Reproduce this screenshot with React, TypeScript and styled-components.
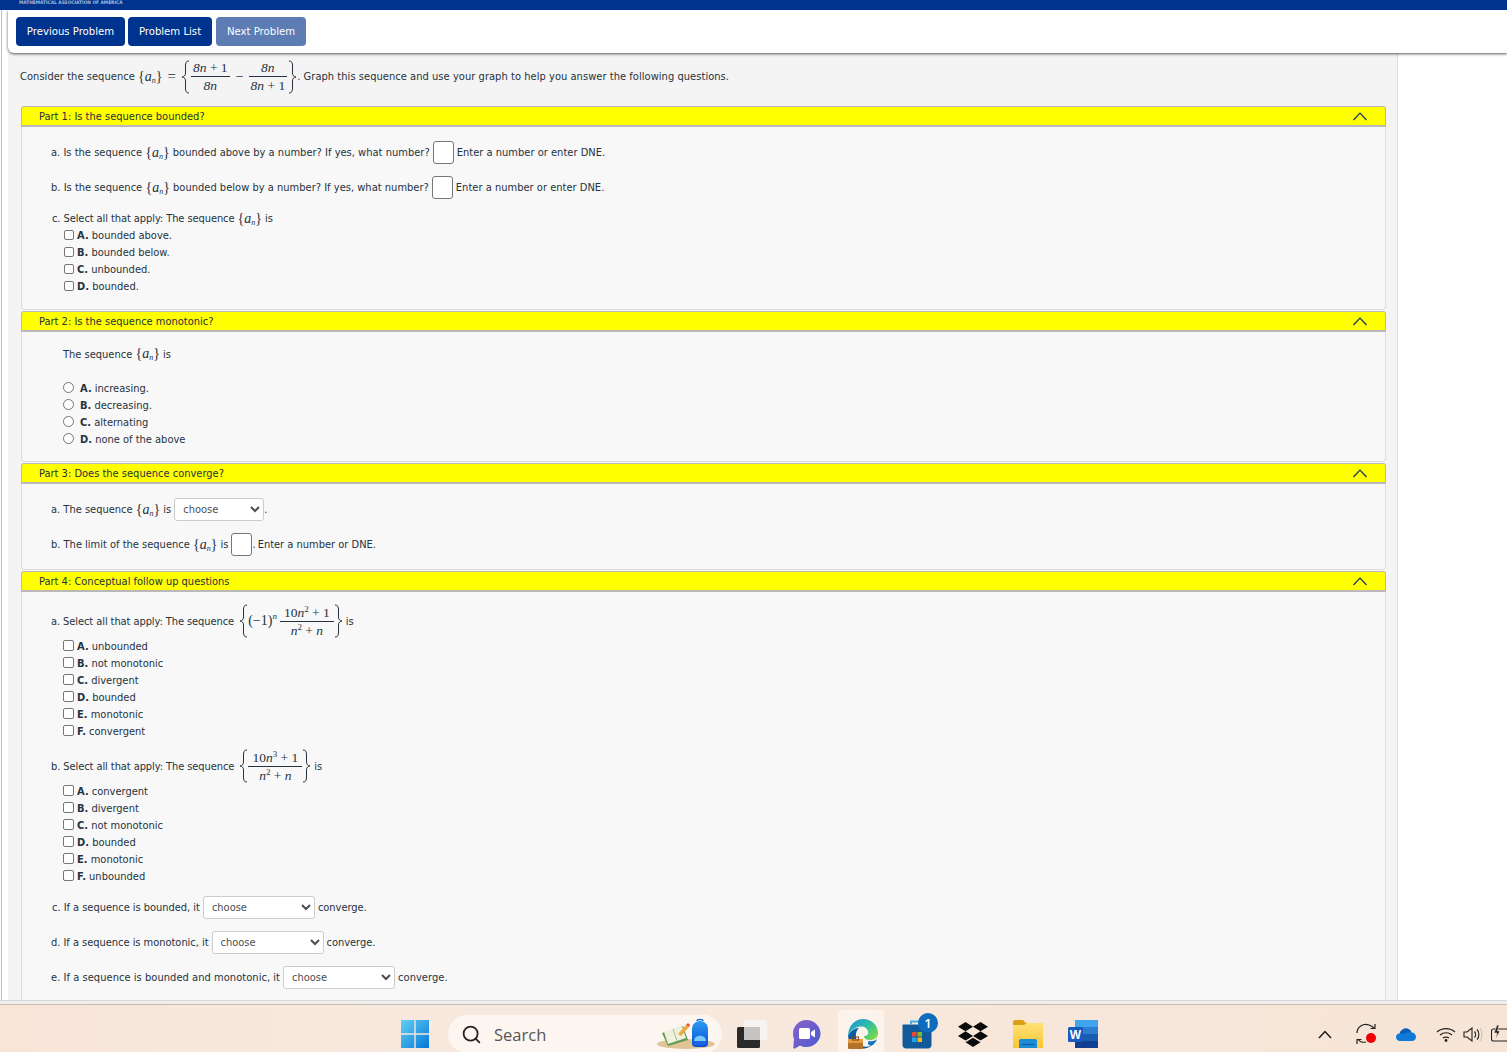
import styled, { createGlobalStyle } from "styled-components";
import { Search } from "lucide-react";
import type { ReactNode } from "react";

const GlobalStyle = createGlobalStyle`
    html, body {
        margin:0;
        padding:0;
        height:100%;
        overflow:hidden;
        background:#ffffff;
    }
    body {
        font-family:"DejaVu Sans Condensed", "DejaVu Sans", sans-serif;
        font-stretch:condensed;
        font-size:11px;
        color:#26323d;
    }
`;

const Page = styled.div`
    width:1507px;
    height:1052px;
    display:flex;
    flex-direction:column;
    overflow:hidden;
    background:#eeeeee;
`;

const TopBar = styled.div`
    height:10px;
    flex:none;
    background:#00338d;
    overflow:hidden;
    padding-left:19px;
    color:#a9bcdc;
    font-size:4.8px;
    line-height:5px;
    font-weight:700;
`;

const Middle = styled.div`
    flex:1;
    min-height:0;
    display:flex;
    overflow:hidden;
    background:#ffffff;
    border-bottom:1px solid #d8d8d8;
`;

const Gutter = styled.div`
    width:8px;
    flex:none;
    box-sizing:border-box;
    margin-left:1px;
    border-left:1px solid #bdbdbd;
    margin-right:-1px;
`;

const Column = styled.div`
    flex:1;
    min-width:0;
    display:flex;
    flex-direction:column;
`;

const NavBar = styled.div`
    height:43px;
    flex:none;
    box-sizing:border-box;
    display:flex;
    gap:3px;
    padding:7px 0 0 8px;
    background:#ffffff;
    border-bottom-left-radius:6px;
    box-shadow:0 1px 3px rgba(0, 0, 0, 0.65);
    position:relative;
    z-index:1;
`;

const NavButton = styled.button<{ $off?: boolean; $w: number }>`
    width:${p => p.$w}px;
    height:29px;
    border:0;
    border-radius:4px;
    padding:0;
    color:#ffffff;
    font-family:inherit;
    font-stretch:condensed;
    font-size:11.25px;
    background:${p => (p.$off ? "#5c7cb3" : "#00338d")};
    &:nth-child(3) {
        margin-left:1px;
    }
`;

const Content = styled.div`
    flex:1;
    min-height:0;
    display:flex;
    overflow:hidden;
`;

const Main = styled.div`
    width:1390px;
    flex:none;
    box-sizing:border-box;
    background:#f4f4f4;
    border-right:1px solid #dedede;
    padding:0 11px 0 13px;
`;

const Intro = styled.div`
    height:53px;
    box-sizing:border-box;
    padding-bottom:6px;
    margin-left:-1px;
    display:flex;
    align-items:center;
    white-space:pre;
    letter-spacing:0.05px;
`;

const Panel = styled.section`
    margin-bottom:1px;
`;

const PanelHead = styled.div`
    height:21px;
    box-sizing:border-box;
    display:flex;
    align-items:center;
    justify-content:space-between;
    padding:0.5px 18px 0 17px;
    background:#ffff00;
    border:1px solid #b9b9b9;
    border-bottom:2px solid #b9b9b9;
    border-radius:3px 3px 0 0;
    color:#26323d;
`;

const PanelBody = styled.div<{ $h: number; $top: number }>`
    height:${p => p.$h}px;
    box-sizing:border-box;
    padding:${p => p.$top}px 0 0 29px;
    background:#f8f8f8;
    border:1px solid #dedede;
    border-top:0;
    border-radius:0 0 4px 4px;
`;

const Row = styled.div<{ $h?: number; $gap?: number; $track?: number; $indent?: number }>`
    height:${p => p.$h ?? 35}px;
    margin-top:${p => p.$gap ?? 0}px;
    padding-left:${p => p.$indent ?? 0}px;
    letter-spacing:${p => p.$track ?? 0}px;
    display:flex;
    align-items:center;
    white-space:pre;
`;

const Hint = styled.span`
    margin-left:2px;
`;

const Option = styled.label<{ $round?: boolean }>`
    height:17px;
    display:flex;
    align-items:center;
    gap:${p => (p.$round ? 6 : 3)}px;
    margin-left:12px;
    white-space:pre;
    b {
        font-weight:700;
    }
`;

const Box = styled.input<{ $size?: number }>`
    appearance:none;
    box-sizing:border-box;
    width:${p => p.$size ?? 10}px;
    height:${p => p.$size ?? 10}px;
    margin:-2px 0 0 ${p => (p.$size ? 0 : 1)}px;
    background:#ffffff;
    border:1px solid #767676;
    border-radius:2px;
    &[type="radio"] {
        border-radius:50%;
    }
`;

const Blank = styled.input<{ $snug?: boolean }>`
    box-sizing:border-box;
    width:21px;
    height:23px;
    margin:0 ${p => (p.$snug ? 0 : 3)}px 0 3px;
    padding:0;
    background:#ffffff;
    border:1px solid #767676;
    border-radius:3px;
`;

const Pick = styled.select<{ $w: number; $snug?: boolean }>`
    width:${p => p.$w}px;
    height:23px;
    margin:0 ${p => (p.$snug ? 0 : 3)}px 0 3px;
    padding:0 6px 0 4px;
    background:#ffffff;
    border:1px solid #cccccc;
    border-radius:3px;
    font-family:inherit;
    font-stretch:condensed;
    font-size:11px;
    color:#4a4f55;
`;

const Maths = styled.span`
    display:inline-flex;
    align-items:center;
    font-family:"Liberation Serif", serif;
    font-size:14px;
    letter-spacing:0;
    color:#26323d;
    i {
        font-style:italic;
    }
    sub {
        font-size:8px;
        line-height:0;
        font-style:italic;
        vertical-align:-2px;
    }
    sup {
        font-size:9px;
        line-height:0;
    }
`;

const Frac = styled.span<{ $wide?: boolean }>`
    display:inline-flex;
    flex-direction:column;
    align-items:center;
    margin:0 ${p => (p.$wide ? 0 : 1)}px;
    font-size:13.5px;
    line-height:15px;
    span + span {
        border-top:1px solid #26323d;
        padding:1px 2px 0;
        align-self:stretch;
        text-align:center;
    }
    span:first-child {
        padding:0 ${p => (p.$wide ? 4 : 2)}px 1px;
    }
`;

const Op = styled.span<{ $wide?: boolean }>`
    margin:0 ${p => (p.$wide ? 5 : 4)}px 0 5px;
    font-size:${p => (p.$wide ? 15 : 14)}px;
`;

const Power = styled.span`
    margin-right:3px;
`;

const BraceMark = styled.svg<{ $flip?: boolean; $shift?: boolean }>`
    flex:none;
    margin-left:${p => (p.$shift ? 2 : 0)}px;
    transform:${p => (p.$flip ? "scaleX(-1)" : "none")};
`;

function Brace({ flip, shift }: { flip?: boolean; shift?: boolean }) {
    return (
        <BraceMark $flip={flip} $shift={shift} width="9" height="34" viewBox="0 0 9 34">
            <path d="M8 1C5 1 4.500 3 4.500 6V13C4.500 15.500 3 17 1 17C3 17 4.500 18.500 4.500 21V28C4.500 31 5 33 8 33" fill="none" stroke="#26323d" strokeWidth="1" />
        </BraceMark>
    );
}

function An() {
    return (
        <Maths>
            <span>{"{"}<i>a</i><sub>n</sub>{"}"}</span>
        </Maths>
    );
}

function Chevron() {
    return (
        <svg width="14" height="9" viewBox="0 0 14 9">
            <polyline points="0.5,8 7,1.2 13.5,8" fill="none" stroke="#14365f" strokeWidth="1.2" />
        </svg>
    );
}

function Section({ title, h, top, children }: { title: string; h: number; top: number; children: ReactNode }) {
    return (
        <Panel>
            <PanelHead>
                <span>{title}</span>
                <Chevron />
            </PanelHead>
            <PanelBody $h={h} $top={top}>{children}</PanelBody>
        </Panel>
    );
}

function Choices({ items, size, round }: { items: [string, string][]; size?: number; round?: boolean }) {
    return (
        <>
            {items.map(([k, v]) => (
                <Option key={k} $round={round}>
                    <Box type={round ? "radio" : "checkbox"} $size={size} />
                    <span><b>{k}.</b> {v}</span>
                </Option>
            ))}
        </>
    );
}

function Choose({ w, snug }: { w: number; snug?: boolean }) {
    return (
        <Pick $w={w} $snug={snug} defaultValue="choose">
            <option>choose</option>
        </Pick>
    );
}

const Taskbar = styled.div`
    height:48px;
    flex:none;
    margin-top:3px;
    display:flex;
    align-items:center;
    overflow:hidden;
    padding:11px 0 0 400px;
    background:linear-gradient(90deg, #f7e6d8, #f8e9df 40%, #f6e5d6);
    border-top:1px solid #cbbcb0;
    box-sizing:border-box;
`;

const SearchPill = styled.div`
    width:274px;
    height:38px;
    flex:none;
    align-self:flex-end;
    box-sizing:border-box;
    margin:0 15px -1px 18px;
    padding-left:13px;
    display:flex;
    align-items:center;
    gap:12px;
    position:relative;
    background:#fdf6f0;
    border-radius:19px;
    font-family:"Open Sans", sans-serif;
    font-stretch:normal;
    font-size:16.5px;
    color:#555555;
`;

const PillArt = styled.svg`
    position:absolute;
    right:2px;
    top:1px;
`;

const Slot = styled.div<{ $w: number; $after?: number }>`
    width:${p => p.$w}px;
    height:34px;
    margin-right:${p => p.$after ?? 0}px;
    flex:none;
    display:flex;
    align-items:center;
    justify-content:center;
    position:relative;
`;

const Tile = styled.div`
    width:46px;
    height:42px;
    flex:none;
    align-self:flex-end;
    box-sizing:border-box;
    margin-right:18px;
    padding:5px 0 0 2px;
    display:flex;
    align-items:center;
    justify-content:center;
    background:#fbf3ec;
    border-radius:4px 4px 0 0;
`;

const Count = styled.span`
    position:absolute;
    top:-4px;
    right:-6px;
    width:20px;
    height:20px;
    border-radius:50%;
    background:#0f6cbd;
    color:#ffffff;
    font-family:"Open Sans", sans-serif;
    font-stretch:normal;
    font-size:13px;
    font-weight:600;
    line-height:20px;
    text-align:center;
`;

const Tray = styled.div`
    margin-left:219px;
    display:flex;
    align-items:center;
    flex:none;
`;

export default function App() {
    return (
        <Page>
            <GlobalStyle />
            <TopBar>MATHEMATICAL ASSOCIATION OF AMERICA</TopBar>
            <Middle>
                <Gutter />
                <Column>
                    <NavBar>
                        <NavButton $w={109}>Previous Problem</NavButton>
                        <NavButton $w={84}>Problem List</NavButton>
                        <NavButton $w={90} $off>Next Problem</NavButton>
                    </NavBar>
                    <Content>
                        <Main>
                            <Intro>
                                Consider the sequence <An />
                                <Maths>
                                    <Op $wide>=</Op>
                                    <Brace />
                                    <Frac><span><i>8n</i> + 1</span><span><i>8n</i></span></Frac>
                                    <Op>−</Op>
                                    <Frac><span><i>8n</i></span><span><i>8n</i> + 1</span></Frac>
                                    <Brace flip />
                                </Maths>
                                . Graph this sequence and use your graph to help you answer the following questions.
                            </Intro>
                            <Section title="Part 1: Is the sequence bounded?" h={183} top={8}>
                                <Row $track={0.02}>a. Is the sequence <An /> bounded above by a number? If yes, what number?<Blank />Enter a number or enter DNE.</Row>
                                <Row $track={0.02}>b. Is the sequence <An /> bounded below by a number? If yes, what number?<Blank />Enter a number or enter DNE.</Row>
                                <Row $h={17} $gap={5} $indent={1} $track={-0.08}>c. Select all that apply: The sequence <An /> is</Row>
                                <Choices items={[["A", "bounded above."], ["B", "bounded below."], ["C", "unbounded."], ["D", "bounded."]]} />
                            </Section>
                            <Section title="Part 2: Is the sequence monotonic?" h={130} top={13}>
                                <Row $h={18} $indent={12}>The sequence <An /> is</Row>
                                <Row $h={17} />
                                <Choices round size={11} items={[["A", "increasing."], ["B", "decreasing."], ["C", "alternating"], ["D", "none of the above"]]} />
                            </Section>
                            <Section title="Part 3: Does the sequence converge?" h={86} top={8}>
                                <Row>a. The sequence <An /> is<Choose w={90} snug />.</Row>
                                <Row>b. The limit of the sequence <An /> is<Blank $snug />.<Hint>Enter a number or DNE.</Hint></Row>
                            </Section>
                            <Section title="Part 4: Conceptual follow up questions" h={420} top={12}>
                                <Row $h={34} $track={-0.08}>
                                    a. Select all that apply: The sequence <Maths>
                                        <Brace shift />
                                        <Power>(−1)<sup><i>n</i></sup></Power>
                                        <Frac $wide><span>10<i>n</i><sup>2</sup> + 1</span><span><i>n</i><sup>2</sup> + <i>n</i></span></Frac>
                                        <Brace flip />
                                    </Maths> is
                                </Row>
                                <Choices size={11} items={[["A", "unbounded"], ["B", "not monotonic"], ["C", "divergent"], ["D", "bounded"], ["E", "monotonic"], ["F", "convergent"]]} />
                                <Row $h={34} $gap={9} $track={-0.08}>
                                    b. Select all that apply: The sequence <Maths>
                                        <Brace shift />
                                        <Frac $wide><span>10<i>n</i><sup>3</sup> + 1</span><span><i>n</i><sup>2</sup> + <i>n</i></span></Frac>
                                        <Brace flip />
                                    </Maths> is
                                </Row>
                                <Choices size={11} items={[["A", "convergent"], ["B", "divergent"], ["C", "not monotonic"], ["D", "bounded"], ["E", "monotonic"], ["F", "unbounded"]]} />
                                <Row $gap={5} $indent={1} $track={-0.03}>c. If a sequence is bounded, it<Choose w={112} />converge.</Row>
                                <Row $track={-0.03}>d. If a sequence is monotonic, it<Choose w={112} />converge.</Row>
                                <Row $track={0.05}>e. If a sequence is bounded and monotonic, it<Choose w={112} />converge.</Row>
                            </Section>
                        </Main>
                    </Content>
                </Column>
            </Middle>
            <Taskbar>
                <Slot $w={30}>
                    <svg width="30" height="30" viewBox="0 0 30 30">
                        <defs>
                            <linearGradient id="win" x1="0" y1="0" x2="1" y2="1">
                                <stop offset="0" stopColor="#62cff6" />
                                <stop offset="1" stopColor="#0678d6" />
                            </linearGradient>
                        </defs>
                        <path d="M1 1H14.300V14.300H1ZM15.700 1H29V14.300H15.700ZM1 15.700H14.300V29H1ZM15.700 15.700H29V29H15.700Z" fill="url(#win)" />
                    </svg>
                </Slot>
                <SearchPill>
                    <Search size={21} color="#222222" strokeWidth={2} />
                    Search
                    <PillArt width="64" height="34" viewBox="656 1016 64 34">
                        <defs>
                            <linearGradient id="pack" x1="0" y1="0" x2="0" y2="1">
                                <stop offset="0" stopColor="#2a9cf2" />
                                <stop offset="1" stopColor="#0a4fd6" />
                            </linearGradient>
                        </defs>
                        <ellipse cx="686" cy="1044" rx="29" ry="5" fill="#dfc495" />
                        <path d="M662 1033L683 1026L688 1040L668 1046Z" fill="#5f9a52" />
                        <path d="M664 1032L682 1026L686 1038L668 1044Z" fill="#eef1dc" />
                        <path d="M673 1029L677 1041" stroke="#9aa889" strokeWidth="0.8" />
                        <path d="M678 1034L686 1025L689 1027L681 1036Z" fill="#efa63f" />
                        <path d="M686 1025L688 1023L690 1025L689 1027Z" fill="#e0503c" />
                        <path d="M692 1029C692 1024 696 1021 700 1021C704 1021 708 1024 708 1029V1044C708 1046 706 1047 704 1047H696C694 1047 692 1046 692 1044Z" fill="url(#pack)" />
                        <path d="M697 1021C697 1019 703 1019 703 1021" fill="none" stroke="#1b6fdc" strokeWidth="1.500" />
                        <path d="M694 1041C694 1034 706 1034 706 1041Z" fill="#7cc7fa" />
                        <path d="M694 1041H706V1045H694Z" fill="#1e63e0" />
                    </PillArt>
                </SearchPill>
                <Slot $w={30} $after={25}>
                    <svg width="30" height="30" viewBox="0 0 30 30">
                        <rect x="7" y="1" width="23" height="20" rx="1.500" fill="#f6f4f2" />
                        <rect x="0" y="8" width="23" height="21" rx="1.500" fill="#2a2a2a" />
                        <rect x="7" y="8" width="16" height="13" fill="#c6c4c2" />
                    </svg>
                </Slot>
                <Slot $w={29} $after={17}>
                    <svg width="29" height="30" viewBox="0 0 29 30">
                        <defs>
                            <linearGradient id="chat" x1="0" y1="0" x2="1" y2="1">
                                <stop offset="0" stopColor="#8a62c8" />
                                <stop offset="1" stopColor="#4a5ad0" />
                            </linearGradient>
                        </defs>
                        <path d="M14.500 1C22 1 28.500 7 28.500 14.500C28.500 22 22 28 14.500 28C12 28 10 27.500 8 26.500L3 29.500C2 30 1 29 1.300 28L2 20C1.300 18.500 1 16.500 1 14.500C1 7 7 1 14.500 1Z" fill="url(#chat)" />
                        <rect x="7" y="9" width="11" height="11" rx="1.500" fill="#ffffff" />
                        <path d="M19 13L23 10.500V18.500L19 16Z" fill="#ffffff" />
                    </svg>
                </Slot>
                <Tile>
                    <svg width="31" height="30" viewBox="0 0 31 30">
                        <defs>
                            <linearGradient id="edge" x1="0" y1="0" x2="1" y2="0.800">
                                <stop offset="0" stopColor="#1b8fe0" />
                                <stop offset="0.55" stopColor="#2fc0a5" />
                                <stop offset="1" stopColor="#7fd83f" />
                            </linearGradient>
                        </defs>
                        <path d="M16 0C25 0 31 6.500 31 14C31 19 27 21 23 21C19 21 17 19.500 17 17C20 17 22 15 21 12C20 9 17 7 13 7.500C7 8.500 3 12 1 17C1 7 8 0 16 0Z" fill="url(#edge)" />
                        <path d="M1 17C3 12 8 9 12 9C8 12 8 19 11 24C13 27 18 29 24 27C18 31 10 30 6 26C3 23 1 20 1 17Z" fill="#0c59a4" />
                        <path d="M22 22C25 22.500 28 22 30 20C29 23 27 25.500 24 27C21 26 20 24 22 22Z" fill="#0e74c9" />
                        <rect x="1" y="20" width="15" height="10" rx="1" fill="#b5712a" />
                        <rect x="1" y="20" width="15" height="4" fill="#e39a3b" />
                        <rect x="5.500" y="18" width="6" height="3" fill="none" stroke="#7d4a17" strokeWidth="1" />
                    </svg>
                </Tile>
                <Slot $w={30} $after={26}>
                    <svg width="30" height="30" viewBox="0 0 30 30">
                        <path d="M0.500 5.500H29.500V26C29.500 28 28 29.500 26 29.500H4C2 29.500 0.500 28 0.500 26Z" fill="#125a9c" />
                        <path d="M9 5V2.500H20V5" fill="none" stroke="#45b0e8" strokeWidth="2" />
                        <rect x="10" y="13" width="4.500" height="4.500" fill="#e8492e" />
                        <rect x="15.500" y="13" width="4.500" height="4.500" fill="#7fba2a" />
                        <rect x="10" y="18.500" width="4.500" height="4.500" fill="#21a5ee" />
                        <rect x="15.500" y="18.500" width="4.500" height="4.500" fill="#fcb90f" />
                    </svg>
                    <Count>1</Count>
                </Slot>
                <Slot $w={30} $after={25}>
                    <svg width="30" height="25" viewBox="1 1 28 27" preserveAspectRatio="none">
                        <path d="M8 1L15 6L8 11L1 6ZM22 1L29 6L22 11L15 6ZM8 11L15 16L8 21L1 16ZM22 11L29 16L22 21L15 16ZM15 18L22 23L15 28L8 23Z" fill="#0b0b0b" />
                    </svg>
                </Slot>
                <Slot $w={30} $after={25}>
                    <svg width="30" height="28" viewBox="0 0 30 28">
                        <defs>
                            <linearGradient id="folder" x1="0" y1="0" x2="0" y2="1">
                                <stop offset="0" stopColor="#fde27a" />
                                <stop offset="1" stopColor="#fbc531" />
                            </linearGradient>
                        </defs>
                        <path d="M0 2C0 1 1 0 2 0H10L13 3H30V8H0Z" fill="#d9a014" />
                        <path d="M0 5H11L14 3H30V28H0Z" fill="url(#folder)" />
                        <path d="M6 21C6 19.500 7 19 8 19H22C23 19 24 19.500 24 21V28H6Z" fill="#1c8bd6" />
                        <path d="M9 24.500H21" stroke="#0b5fa5" strokeWidth="1.200" />
                    </svg>
                </Slot>
                <Slot $w={30}>
                    <svg width="30" height="28" viewBox="0 0 30 28">
                        <rect x="7" y="0" width="23" height="28" rx="1.500" fill="#2f7dd3" />
                        <rect x="7" y="0" width="23" height="7" fill="#41a5ee" />
                        <rect x="7" y="14" width="23" height="7" fill="#1a5cb0" />
                        <rect x="7" y="21" width="23" height="7" fill="#103f91" />
                        <rect x="0" y="7" width="15" height="15" rx="1.500" fill="#185abd" />
                        <text x="7.500" y="19" textAnchor="middle" fontFamily="Liberation Sans, sans-serif" fontSize="12" fontWeight="700" fill="#ffffff">W</text>
                    </svg>
                </Slot>
                <Tray>
                    <Slot $w={16} $after={23}>
                        <svg width="14" height="9" viewBox="0 0 14 9">
                            <polyline points="1,8 7,1.500 13,8" fill="none" stroke="#1a1a1a" strokeWidth="1.500" />
                        </svg>
                    </Slot>
                    <Slot $w={22} $after={18}>
                        <svg width="22" height="24" viewBox="0 0 22 24">
                            <path d="M1 11C1 5 7 1 13 3C15 3.700 17 5 18 6M19 2V6.500H14.500" fill="none" stroke="#222222" strokeWidth="1.200" />
                            <path d="M10 20C6 21 3 19 2 17M1 22V17.500H5.500" fill="none" stroke="#222222" strokeWidth="1.200" />
                            <circle cx="15" cy="16" r="5" fill="#f00000" />
                        </svg>
                    </Slot>
                    <Slot $w={20} $after={20}>
                        <svg width="20" height="13" viewBox="0 0 20 13">
                            <path d="M4 13C1.500 13 0 11 0 9C0 7 1.500 5.500 3.500 5.500C4.500 2.500 7 0.500 10 0.500C12.500 0.500 14.500 2 15.500 4.500C18 4.500 20 6.500 20 9C20 11.500 18 13 16 13Z" fill="#0f7bd6" />
                            <path d="M3.500 5.500C4.500 2.500 7 0.500 10 0.500C12.500 0.500 14.500 2 15.500 4.500C12 4 9 5 7.500 6.500C6.500 5.500 5 5.200 3.500 5.500Z" fill="#0a5fb4" />
                        </svg>
                    </Slot>
                    <Slot $w={20} $after={7}>
                        <svg width="20" height="15" viewBox="0 0 20 15">
                            <path d="M1 5C6 0.500 14 0.500 19 5M4 8C7.500 5 12.500 5 16 8M7 11C8.500 9.800 11.500 9.800 13 11" fill="none" stroke="#222222" strokeWidth="1.200" />
                            <circle cx="10" cy="13.500" r="1.400" fill="#222222" />
                        </svg>
                    </Slot>
                    <Slot $w={20} $after={8}>
                        <svg width="20" height="15" viewBox="0 0 20 15">
                            <path d="M1 5V10H4L9 14V1L4 5Z" fill="none" stroke="#222222" strokeWidth="1.100" />
                            <path d="M11.500 4.500C13 6 13 9 11.500 10.500M14 2.500C16.500 5 16.500 10 14 12.500" fill="none" stroke="#222222" strokeWidth="1.100" />
                            <path d="M17 1C19.500 4.500 19.500 10.500 17 14" fill="none" stroke="#bbbbbb" strokeWidth="1" />
                        </svg>
                    </Slot>
                    <Slot $w={20}>
                        <svg width="20" height="20" viewBox="0 0 20 20">
                            <rect x="0.500" y="5" width="19" height="12" rx="2" fill="none" stroke="#222222" strokeWidth="1.100" />
                            <path d="M6 1L3 9H6L4.500 15L9 7H6.500L8 1Z" fill="#222222" stroke="#f7e6d8" strokeWidth="0.600" />
                        </svg>
                    </Slot>
                </Tray>
            </Taskbar>
        </Page>
    );
}
